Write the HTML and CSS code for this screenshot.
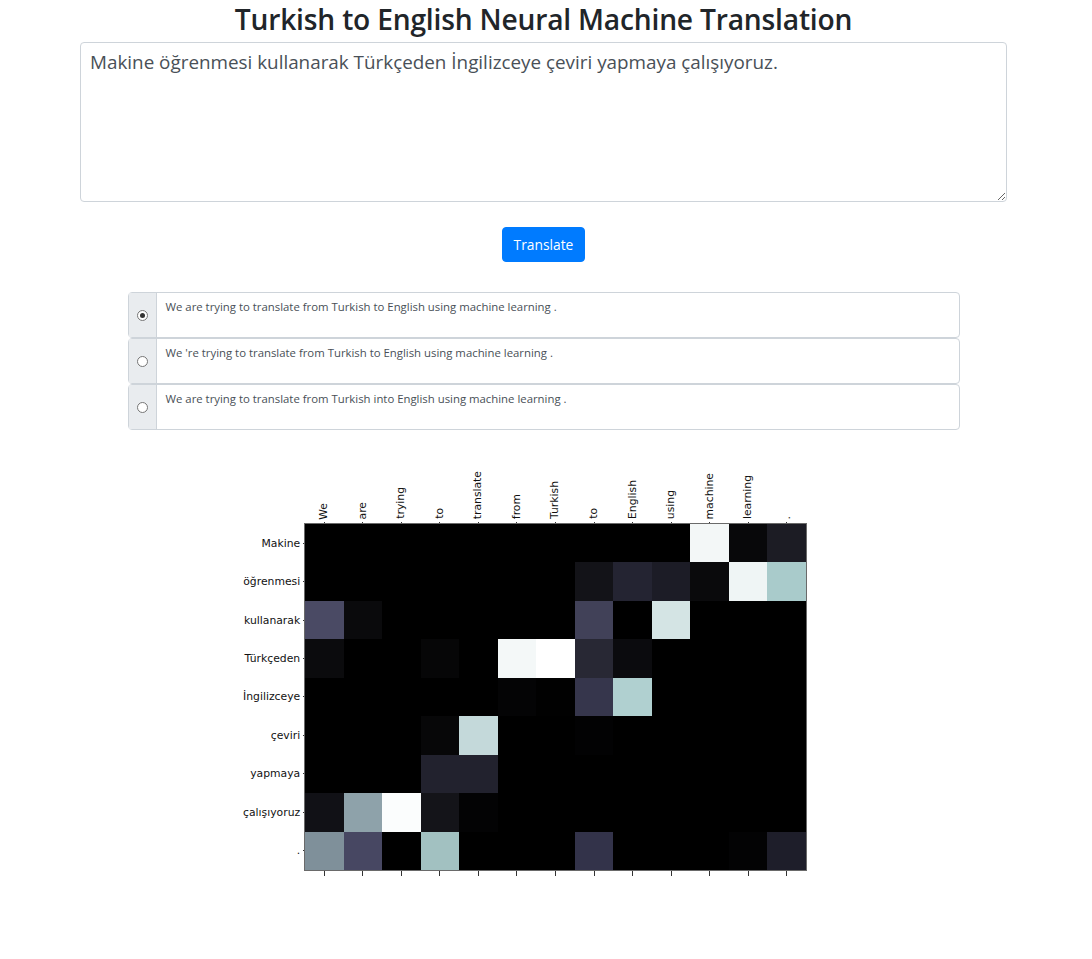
FILE: index.html
```html
<!DOCTYPE html>
<html lang="tr">
<head>
<meta charset="utf-8">
<title>Turkish to English Neural Machine Translation</title>
<link rel="stylesheet" href="styles.css">
</head>
<body>
<div class="page">
  <h1 class="title">Turkish to English Neural Machine Translation</h1>
  <div class="input-wrap">
    <textarea class="src">Makine öğrenmesi kullanarak Türkçeden İngilizceye çeviri yapmaya çalışıyoruz.</textarea>
  </div>
  <div class="actions"><button class="btn">Translate</button></div>
  <div class="choices">
    <label class="choice">
      <span class="choice-radio"><input class="radio" type="radio" name="t" checked></span>
      <span class="choice-text">We are trying to translate from Turkish to English using machine learning .</span>
    </label>
    <label class="choice">
      <span class="choice-radio"><input class="radio" type="radio" name="t"></span>
      <span class="choice-text">We 're trying to translate from Turkish to English using machine learning .</span>
    </label>
    <label class="choice">
      <span class="choice-radio"><input class="radio" type="radio" name="t"></span>
      <span class="choice-text">We are trying to translate from Turkish into English using machine learning .</span>
    </label>
  </div>

  <div class="figure">
    <div class="fig-top">
      <div class="corner"></div>
      <div class="xlabels">
        <span class="xl"><span class="xt">We</span></span>
        <span class="xl"><span class="xt">are</span></span>
        <span class="xl"><span class="xt">trying</span></span>
        <span class="xl"><span class="xt">to</span></span>
        <span class="xl"><span class="xt">translate</span></span>
        <span class="xl"><span class="xt">from</span></span>
        <span class="xl"><span class="xt">Turkish</span></span>
        <span class="xl"><span class="xt">to</span></span>
        <span class="xl"><span class="xt">English</span></span>
        <span class="xl"><span class="xt">using</span></span>
        <span class="xl"><span class="xt">machine</span></span>
        <span class="xl"><span class="xt">learning</span></span>
        <span class="xl"><span class="xt">.</span></span>
      </div>
    </div>
    <div class="fig-body">
      <div class="ylabels">
        <span class="yl">Makine</span>
        <span class="yl">öğrenmesi</span>
        <span class="yl">kullanarak</span>
        <span class="yl">Türkçeden</span>
        <span class="yl">İngilizceye</span>
        <span class="yl">çeviri</span>
        <span class="yl">yapmaya</span>
        <span class="yl">çalışıyoruz</span>
        <span class="yl">.</span>
      </div>
      <div class="plot">
        <!-- row 0 -->
        <i></i><i></i><i></i><i></i><i></i><i></i><i></i><i></i><i></i><i></i>
        <i style="background:#f3f7f7"></i><i style="background:#08080a"></i><i style="background:#1c1c24"></i>
        <!-- row 1 -->
        <i></i><i></i><i></i><i></i><i></i><i></i><i></i>
        <i style="background:#131318"></i><i style="background:#242432"></i><i style="background:#1c1c26"></i><i style="background:#0a0a0c"></i><i style="background:#eff5f5"></i><i style="background:#a9cbcb"></i>
        <!-- row 2 -->
        <i style="background:#4a4a64"></i><i style="background:#0a0a0c"></i><i></i><i></i><i></i><i></i><i></i>
        <i style="background:#414158"></i><i></i><i style="background:#d4e4e4"></i><i></i><i></i><i></i>
        <!-- row 3 -->
        <i style="background:#0b0b0d"></i><i></i><i></i><i style="background:#060607"></i><i></i>
        <i style="background:#f4f8f8"></i><i style="background:#ffffff"></i><i style="background:#282834"></i><i style="background:#0b0b0e"></i><i></i><i></i><i></i><i></i>
        <!-- row 4 -->
        <i></i><i></i><i></i><i></i><i></i>
        <i style="background:#040405"></i><i style="background:#010101"></i><i style="background:#36364c"></i><i style="background:#b0d0d0"></i><i></i><i></i><i></i><i></i>
        <!-- row 5 -->
        <i></i><i></i><i></i><i style="background:#070708"></i><i style="background:#c4d9da"></i><i></i><i></i>
        <i style="background:#020203"></i><i></i><i></i><i></i><i></i><i></i>
        <!-- row 6 -->
        <i></i><i></i><i></i><i style="background:#22222e"></i><i style="background:#22222e"></i>
        <i></i><i></i><i></i><i></i><i></i><i></i><i></i><i></i>
        <!-- row 7 -->
        <i style="background:#111116"></i><i style="background:#8ea2aa"></i><i style="background:#fbfdfd"></i><i style="background:#141419"></i><i style="background:#030304"></i>
        <i></i><i></i><i></i><i></i><i></i><i></i><i></i><i></i>
        <!-- row 8 -->
        <i style="background:#7f909a"></i><i style="background:#474762"></i><i></i><i style="background:#a2c1c1"></i><i></i><i></i><i></i>
        <i style="background:#33334a"></i><i></i><i></i><i></i><i style="background:#030304"></i><i style="background:#1e1e2a"></i>
      </div>
    </div>
    <div class="fig-bottom">
      <div class="corner"></div>
      <div class="bticks">
        <span></span><span></span><span></span><span></span><span></span><span></span><span></span>
        <span></span><span></span><span></span><span></span><span></span><span></span>
      </div>
    </div>
  </div>
</div>
</body>
</html>
```

FILE: styles.css
```css
* { box-sizing: border-box; }

html, body {
  margin: 0;
  padding: 0;
  background: #fff;
}

body {
  font-family: "Open Sans", "Noto Sans", sans-serif;
  color: #212529;
}

.page {
  width: 1087px;
  display: flex;
  flex-direction: column;
  align-items: center;
}

.title {
  margin: 0 0 4px;
  font-size: 28.2px;
  font-weight: 600;
  line-height: 38px;
  color: #212529;
  letter-spacing: -0.2px;
}

.input-wrap {
  width: 927px;
}

.src {
  display: block;
  width: 100%;
  height: 160px;
  margin: 0;
  padding: 4px 9px;
  border: 1px solid #ced4da;
  border-radius: 4px;
  font-family: "Open Sans", "Noto Sans", sans-serif;
  font-size: 18.85px;
  line-height: 30px;
  color: #495057;
  background: #fff;
  resize: vertical;
  outline: none;
}

.actions {
  margin-top: 25px;
}

.btn {
  display: block;
  height: 35px;
  padding: 0 11px;
  border: 1px solid #007bff;
  border-radius: 4px;
  background: #007bff;
  color: #fff;
  font-family: "Open Sans", "Noto Sans", sans-serif;
  font-size: 13.8px;
  line-height: 33px;
  cursor: pointer;
}

.choices {
  margin-top: 30px;
  width: 832px;
  display: flex;
  flex-direction: column;
}

.choice {
  display: flex;
  height: 46px;
  border: 1px solid #ced4da;
  border-radius: 4px;
}

.choice-radio {
  width: 28px;
  flex: none;
  display: flex;
  align-items: center;
  justify-content: center;
  background: #e9ecef;
  border-right: 1px solid #ced4da;
}

.radio {
  appearance: none;
  -webkit-appearance: none;
  margin: 0;
  width: 11px;
  height: 11px;
  border: 1px solid #767676;
  border-radius: 50%;
  background: #fff;
  display: grid;
  place-items: center;
}

.radio:checked::after {
  content: "";
  width: 5px;
  height: 5px;
  border-radius: 50%;
  background: #333;
}

.choice-text {
  flex: 1;
  padding: 5px 9px 4px;
  font-size: 11.37px;
  line-height: 18px;
  color: #495057;
}

/* heatmap figure */
.figure {
  margin-top: 41px;
  width: 601px;
  font-family: "DejaVu Sans", sans-serif;
  font-size: 10.8px;
  color: #111;
}

.fig-top,
.fig-bottom,
.fig-body {
  display: flex;
}

.corner {
  width: 62px;
  flex: none;
}

.xlabels {
  width: 501px;
  height: 53px;
  display: grid;
  grid-template-columns: repeat(13, 1fr);
}

.xl {
  display: flex;
  flex-direction: column;
  align-items: center;
  justify-content: flex-end;
}

.xt {
  writing-mode: vertical-rl;
  transform: rotate(180deg);
  line-height: 12px;
  white-space: nowrap;
}

.xl::after {
  content: "";
  flex: none;
  width: 1px;
  height: 5px;
  margin-top: 3px;
  background: #333;
}

.ylabels {
  width: 62px;
  flex: none;
  height: 346px;
  display: grid;
  grid-template-rows: repeat(9, 1fr);
}

.yl {
  display: flex;
  align-items: center;
  justify-content: flex-end;
  white-space: nowrap;
}

.yl::after {
  content: "";
  flex: none;
  width: 5px;
  height: 1px;
  margin-left: 3px;
  background: #333;
}

.plot {
  width: 501px;
  height: 346px;
  display: grid;
  grid-template-columns: repeat(13, 1fr);
  grid-template-rows: repeat(9, 1fr);
  background: #000;
  box-shadow: 0 0 0 1px #6a6a6a;
}

.plot i {
  display: block;
}

.bticks {
  width: 501px;
  height: 6px;
  display: grid;
  grid-template-columns: repeat(13, 1fr);
}

.bticks span {
  justify-self: center;
  width: 1px;
  height: 5px;
  margin-top: 1px;
  background: #333;
}
```
